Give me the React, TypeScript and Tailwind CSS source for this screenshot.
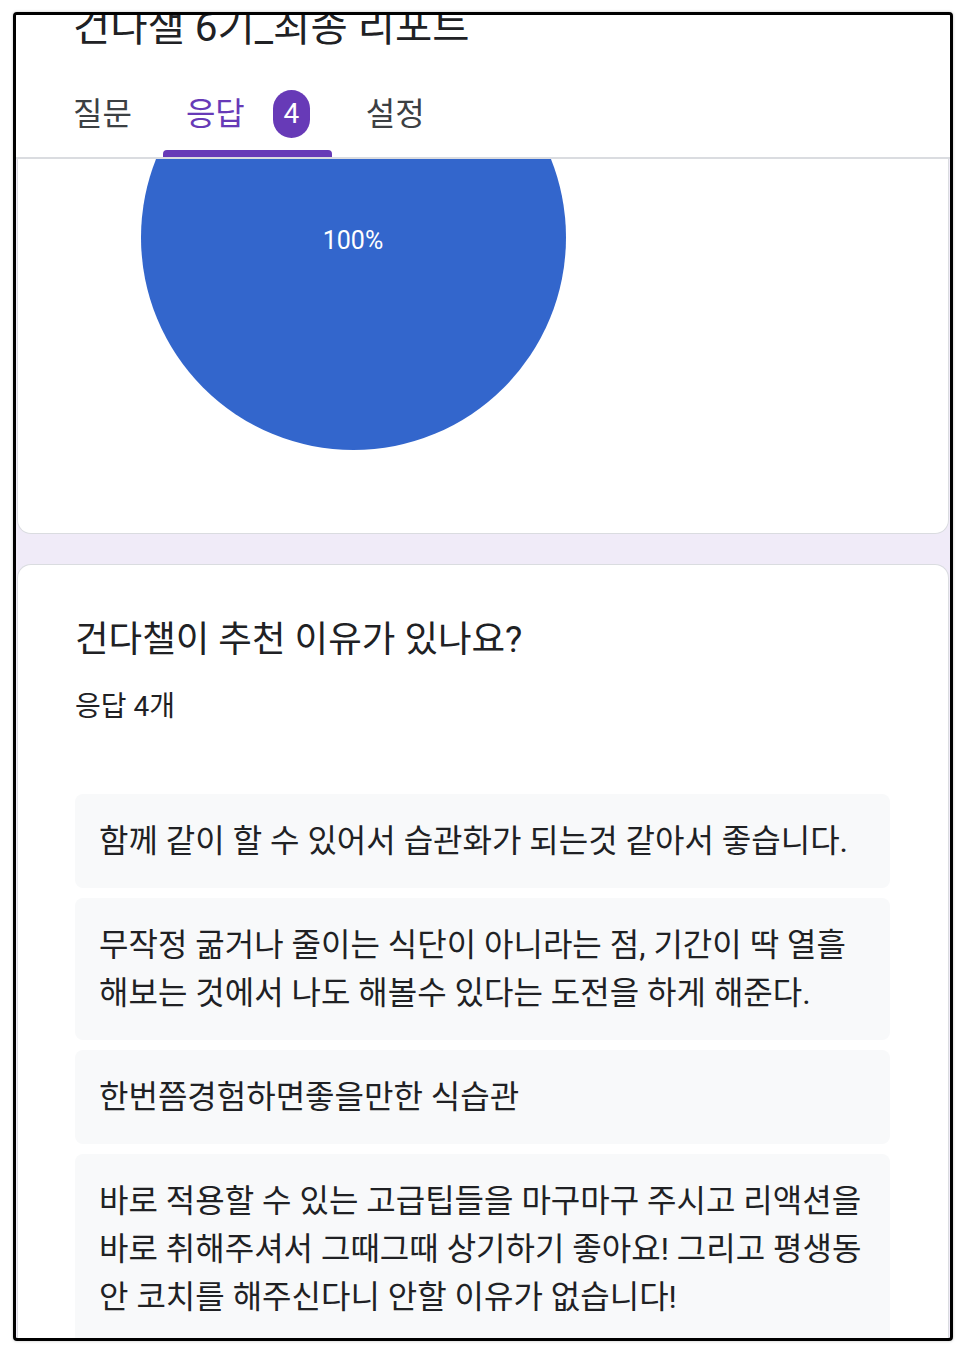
import React from 'react';

const font = { fontFamily: 'Roboto, "Noto Sans CJK KR", sans-serif' };

const answers = [
    '함께 같이 할 수 있어서 습관화가 되는것 같아서 좋습니다.',
    '무작정 굶거나 줄이는 식단이 아니라는 점, 기간이 딱 열흘 해보는 것에서 나도 해볼수 있다는 도전을 하게 해준다.',
    '한번쯤경험하면좋을만한 식습관',
    '바로 적용할 수 있는 고급팁들을 마구마구 주시고 리액션을 바로 취해주셔서 그때그때 상기하기 좋아요! 그리고 평생동안 코치를 해주신다니 안할 이유가 없습니다!',
];

const App: React.FC = () => {
    return (
        <div className="min-h-screen bg-white pt-[12px] pl-[13px]" style={font}>
            {/* Frame */}
            <div className="w-[940px] h-[1329px] border-[3px] border-black rounded-[4px] overflow-hidden bg-[#f0ebf8] flex flex-col shadow-[0_0_3px_rgba(0,0,0,0.25)]">
                {/* Header */}
                <header className="bg-white border-b-2 border-[#dadce0] shrink-0">
                    <h1 className="-mt-[11px] pl-[57px] text-[40.5px] leading-[47px] text-[#202124] whitespace-nowrap">
                        건다챌 6기_최종 리포트
                    </h1>
                    <nav className="flex h-[106px] pl-[35px]">
                        <div className="flex items-center pt-[20px] px-[22px] text-[32px] text-[#3c4043]">질문</div>
                        <div className="relative ml-[9px] flex items-center pt-[20px] pl-[23px] pr-[22px] text-[32px] text-[#673ab7]">
                            응답
                            <span className="ml-[28px] w-[37px] h-[48px] rounded-full bg-[#673ab7] text-white text-[28px] flex items-center justify-center">
                                4
                            </span>
                            <div className="absolute left-0 right-0 bottom-0 h-[7px] rounded-t-[4px] bg-[#673ab7]" />
                        </div>
                        <div className="ml-[12px] flex items-center pt-[20px] px-[22px] text-[32px] text-[#3c4043]">설정</div>
                    </nav>
                </header>

                {/* Pie chart card */}
                <div className="mx-px h-[375px] shrink-0 bg-white border border-t-0 border-[#dadce0] rounded-b-[14px] overflow-hidden">
                    <svg width="425" height="425" viewBox="0 0 425 425" className="ml-[123px] -mt-[134px]">
                        <circle cx="212.5" cy="212.5" r="212.5" fill="#3366cc" />
                        <text x="212" y="217" fill="#ffffff" fontSize="25" textAnchor="middle" dominantBaseline="middle" fontFamily="Roboto, Arial, sans-serif">
                            100%
                        </text>
                    </svg>
                </div>

                {/* Responses card */}
                <div className="mx-px mt-[30px] flex-1 bg-white border border-b-0 border-[#dadce0] rounded-t-[14px] pt-[52px] pl-[57px] pr-[58px] text-[#202124]">
                    <h2 className="text-[36.5px] leading-[46px]">건다챌이 추천 이유가 있나요?</h2>
                    <p className="mt-[27px] text-[28px] leading-[34px]">응답 4개</p>
                    <div className="mt-[70px] flex flex-col gap-[10px]">
                        {answers.map((a, i) => (
                            <div key={i} className="bg-[#f8f9fa] rounded-[8px] pl-[24px] pr-[18px] py-[23px] text-[32px] leading-[48px]">
                                {a}
                            </div>
                        ))}
                    </div>
                </div>
            </div>
        </div>
    );
};

export default App;
